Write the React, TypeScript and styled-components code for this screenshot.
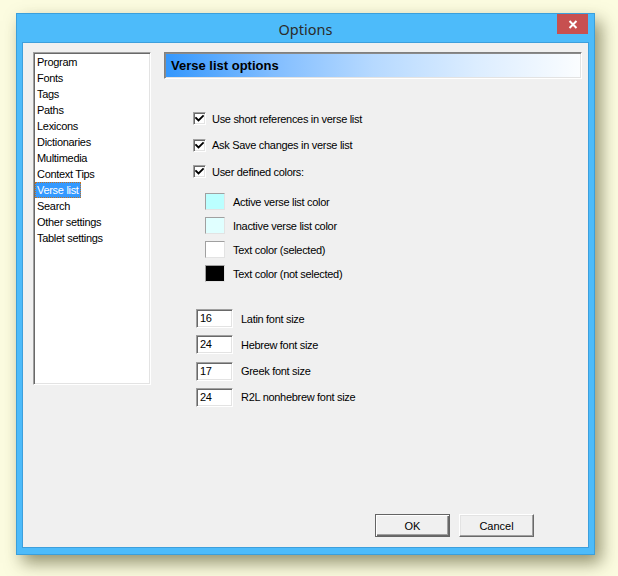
import React from "react";
import styled, { createGlobalStyle } from "styled-components";

const Global = createGlobalStyle`
  html, body { margin: 0; padding: 0; }
  body {
    background: #fcfce0;
    width: 618px;
    height: 576px;
    overflow: hidden;
    font-family: "Liberation Sans", Arial, sans-serif;
  }
`;

const Stage = styled.div`
  padding: 13px 0 0 16px;
`;

const Window = styled.div`
  width: 579px;
  height: 542px;
  box-sizing: border-box;
  border: 1px solid #3a9fdc;
  background: #4dbbfa;
  display: flex;
  flex-direction: column;
  box-shadow: 6px 8px 16px rgba(60, 60, 20, 0.55);
`;

const TitleBar = styled.div`
  position: relative;
  height: 29px;
  display: flex;
  align-items: center;
  justify-content: center;
  font-family: "Noto Sans", "Open Sans", sans-serif;
  font-size: 14.5px;
  color: #2b2b2b;
`;

const CloseButton = styled.div`
  position: absolute;
  right: 6px;
  top: 0;
  width: 31px;
  height: 20px;
  background: #c75050;
  display: flex;
  align-items: center;
  justify-content: center;
`;

const Client = styled.div`
  flex: 1;
  margin: 0 6px 7px 6px;
  background: #f0f0f0;
  box-shadow: 0 0 0 1px #3d9fdc;
  display: flex;
  flex-direction: column;
  font-size: 11px;
  letter-spacing: -0.3px;
  color: #000;
`;

const Body = styled.div`
  flex: 1;
  display: flex;
  padding: 9px 0 0 10px;
`;

const ListBox = styled.div`
  width: 118px;
  height: 333px;
  box-sizing: border-box;
  background: #fff;
  border: 1px solid;
  border-color: #a0a0a0 #fff #fff #a0a0a0;
  box-shadow: inset 1px 1px 0 #696969, inset -1px -1px 0 #e3e3e3;
  padding: 1px 0 0 1px;
`;

const ListItem = styled.div`
  height: 16px;
  line-height: 16px;
`;

const ItemText = styled.span<{ $selected?: boolean }>`
  display: inline-block;
  height: 16px;
  padding: 0 2px;
  box-sizing: border-box;
  background: ${(p) => (p.$selected ? "#3399ff" : "transparent")};
  color: ${(p) => (p.$selected ? "#fff" : "#000")};
  outline: ${(p) => (p.$selected ? "1px dotted #c07020" : "none")};
  outline-offset: -1px;
`;

const Panel = styled.div`
  margin-left: 13px;
  width: 418px;
  display: flex;
  flex-direction: column;
`;

const Header = styled.div`
  height: 27px;
  box-sizing: border-box;
  border: 1px solid;
  border-color: #808080 #fff #fff #808080;
  box-shadow: inset 1px 1px 0 #8a8a8a, inset -1px -1px 0 #e3e3e3;
  background: linear-gradient(to right, #3397fd 0%, #7fbcff 25%, #b6d9ff 50%, #dcedff 75%, #fbfdff 100%);
  display: flex;
  align-items: center;
  padding-left: 6px;
  font-size: 13px;
  font-weight: bold;
  letter-spacing: 0;
`;

const Content = styled.div`
  padding: 33px 0 0 29px;
  display: flex;
  flex-direction: column;
`;

const CheckGroup = styled.div`
  display: flex;
  flex-direction: column;
  gap: 13.5px;
`;

const CheckRow = styled.div`
  display: flex;
  align-items: center;
  height: 13px;
  gap: 6px;
`;

const CheckBox = styled.div`
  width: 13px;
  height: 13px;
  box-sizing: border-box;
  border: 1px solid;
  border-color: #a0a0a0 #fff #fff #a0a0a0;
  box-shadow: inset 1px 1px 0 #696969, inset -1px -1px 0 #e3e3e3;
  background: #fff;
  display: flex;
  align-items: center;
  justify-content: center;
`;

const SwatchGroup = styled.div`
  margin-top: 15px;
  padding-left: 12px;
  display: flex;
  flex-direction: column;
  gap: 7px;
`;

const SwatchRow = styled.div`
  display: flex;
  align-items: center;
  height: 17px;
  gap: 8px;
`;

const Swatch = styled.div<{ $color: string }>`
  width: 20px;
  height: 17px;
  box-sizing: border-box;
  border: 1px solid;
  border-color: #a0a0a0 #e3e3e3 #e3e3e3 #a0a0a0;
  background: ${(p) => p.$color};
`;

const EditGroup = styled.div`
  margin-top: 27px;
  padding-left: 3px;
  display: flex;
  flex-direction: column;
  gap: 7.3px;
`;

const EditRow = styled.div`
  display: flex;
  align-items: center;
  height: 19px;
  gap: 8px;
`;

const EditBox = styled.div`
  width: 37px;
  height: 19px;
  box-sizing: border-box;
  border: 1px solid;
  border-color: #a0a0a0 #fff #fff #a0a0a0;
  box-shadow: inset 1px 1px 0 #696969, inset -1px -1px 0 #e3e3e3;
  background: #fff;
  padding: 0 0 0 3px;
  line-height: 17px;
`;

const Footer = styled.div`
  display: flex;
  justify-content: flex-end;
  gap: 9px;
  padding: 0 54px 10px 0;
`;

const Button = styled.div<{ $default?: boolean }>`
  width: 75px;
  height: 23px;
  box-sizing: border-box;
  background: #f0f0f0;
  border: 1px solid;
  border-color: ${(p) => (p.$default ? "#646464" : "#fff #696969 #696969 #fff")};
  box-shadow: ${(p) =>
    p.$default
      ? "inset 1px 1px 0 #fff, inset -1px -1px 0 #696969, inset -2px -2px 0 #a0a0a0"
      : "inset -1px -1px 0 #a0a0a0, inset 1px 1px 0 #e3e3e3"};
  display: flex;
  align-items: center;
  justify-content: center;
  letter-spacing: 0;
`;

const Check = () => (
  <svg width="9" height="9" viewBox="0 0 9 9">
    <path d="M1 4 L3.5 6.5 L8 2" stroke="#000" strokeWidth="1.8" fill="none" strokeLinecap="square" />
  </svg>
);

const items = [
  "Program",
  "Fonts",
  "Tags",
  "Paths",
  "Lexicons",
  "Dictionaries",
  "Multimedia",
  "Context Tips",
  "Verse list",
  "Search",
  "Other settings",
  "Tablet settings",
];

const checks = [
  "Use short references in verse list",
  "Ask Save changes in verse list",
  "User defined colors:",
];

const swatches = [
  { color: "#bbffff", label: "Active verse list color" },
  { color: "#e0ffff", label: "Inactive verse list color" },
  { color: "#ffffff", label: "Text color (selected)" },
  { color: "#000000", label: "Text color (not selected)" },
];

const edits = [
  { value: "16", label: "Latin font size" },
  { value: "24", label: "Hebrew font size" },
  { value: "17", label: "Greek font size" },
  { value: "24", label: "R2L nonhebrew font size" },
];

export default function App() {
  return (
    <>
      <Global />
      <Stage>
        <Window>
          <TitleBar>
            Options
            <CloseButton>
              <svg width="10" height="9" viewBox="0 0 10 9">
                <path d="M1.5 1 L8.5 8 M8.5 1 L1.5 8" stroke="#fff" strokeWidth="2" />
              </svg>
            </CloseButton>
          </TitleBar>
          <Client>
            <Body>
              <ListBox>
                {items.map((it) => (
                  <ListItem key={it}>
                    <ItemText $selected={it === "Verse list"}>{it}</ItemText>
                  </ListItem>
                ))}
              </ListBox>
              <Panel>
                <Header>Verse list options</Header>
                <Content>
                  <CheckGroup>
                    {checks.map((c) => (
                      <CheckRow key={c}>
                        <CheckBox>
                          <Check />
                        </CheckBox>
                        <span>{c}</span>
                      </CheckRow>
                    ))}
                  </CheckGroup>
                  <SwatchGroup>
                    {swatches.map((s) => (
                      <SwatchRow key={s.label}>
                        <Swatch $color={s.color} />
                        <span>{s.label}</span>
                      </SwatchRow>
                    ))}
                  </SwatchGroup>
                  <EditGroup>
                    {edits.map((e) => (
                      <EditRow key={e.label}>
                        <EditBox>{e.value}</EditBox>
                        <span>{e.label}</span>
                      </EditRow>
                    ))}
                  </EditGroup>
                </Content>
              </Panel>
            </Body>
            <Footer>
              <Button $default>OK</Button>
              <Button>Cancel</Button>
            </Footer>
          </Client>
        </Window>
      </Stage>
    </>
  );
}
